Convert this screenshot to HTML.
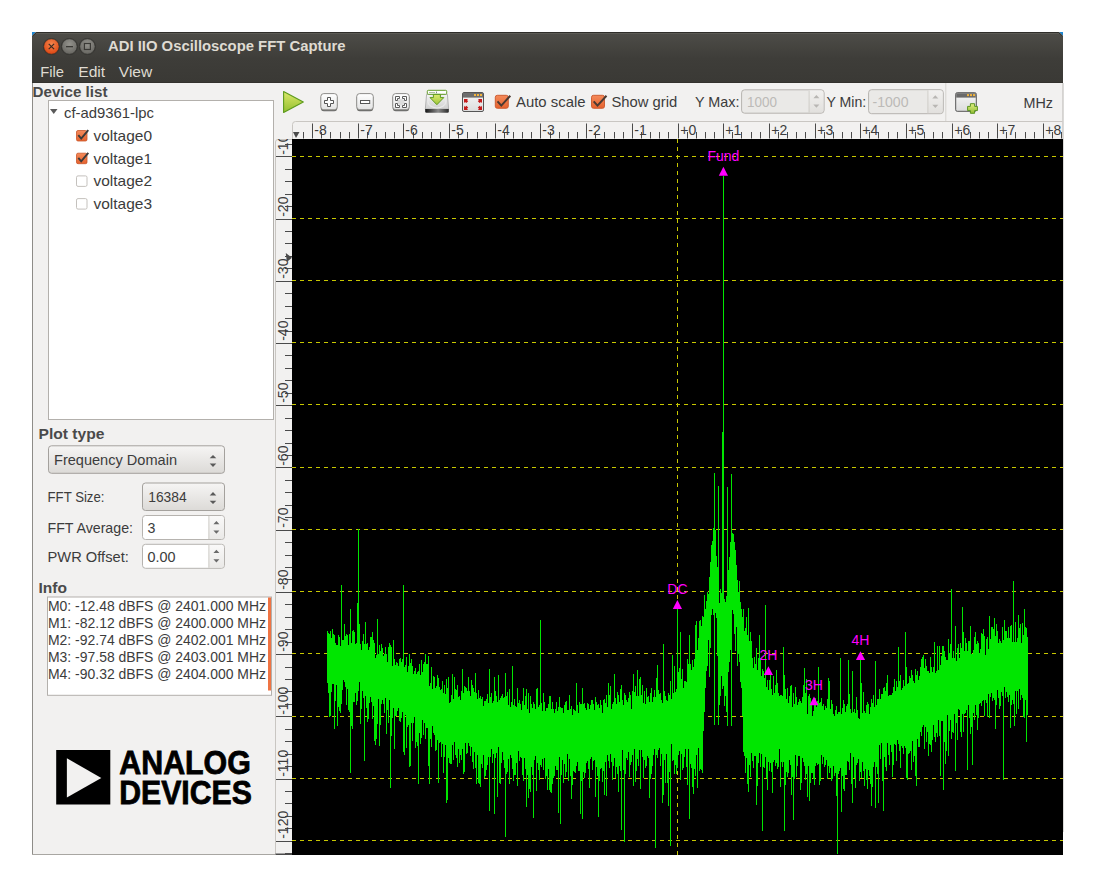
<!DOCTYPE html>
<html><head><meta charset="utf-8"><style>
html,body{margin:0;padding:0;background:#fff;width:1096px;height:888px;overflow:hidden}
svg{display:block;font-family:"Liberation Sans", sans-serif}
</style></head><body>
<svg width="1096" height="888" viewBox="0 0 1096 888">
<rect x="0" y="0" width="1096" height="888" fill="#ffffff"/><defs><linearGradient id="tb" gradientUnits="userSpaceOnUse" x1="0" y1="34" x2="0" y2="83"><stop offset="0" stop-color="#4d4c47"/><stop offset="0.5" stop-color="#3e3d39"/><stop offset="1" stop-color="#3a3935"/></linearGradient><radialGradient id="cls" cx="0.5" cy="0.35" r="0.6"><stop offset="0" stop-color="#f4874f"/><stop offset="1" stop-color="#df4a16"/></radialGradient><radialGradient id="gbtn" cx="0.5" cy="0.35" r="0.6"><stop offset="0" stop-color="#94938d"/><stop offset="1" stop-color="#6a6964"/></radialGradient><linearGradient id="play" x1="0" y1="0" x2="0" y2="1"><stop offset="0" stop-color="#dbe86a"/><stop offset="1" stop-color="#93bf2f"/></linearGradient><linearGradient id="btn" x1="0" y1="0" x2="0" y2="1"><stop offset="0" stop-color="#ffffff"/><stop offset="0.55" stop-color="#f0f0f0"/><stop offset="1" stop-color="#e2e2e2"/></linearGradient><linearGradient id="combo" x1="0" y1="0" x2="0" y2="1"><stop offset="0" stop-color="#f6f5f4"/><stop offset="1" stop-color="#dcdad7"/></linearGradient><linearGradient id="chk" x1="0" y1="0" x2="0" y2="1"><stop offset="0" stop-color="#f58a5a"/><stop offset="1" stop-color="#e5632f"/></linearGradient></defs><path d="M32 32 h4 l-4 4 Z M1063 32 h-4 l4 4 Z" fill="#1e86d0"/><path d="M32 36 L36 32 H1059 L1063 36 V83 H32 Z" fill="url(#tb)"/><path d="M32.5 36 L36.5 32.5 H1058.5 L1062.5 36" fill="none" stroke="#2f2e2a" stroke-width="1"/><rect x="36" y="33" width="1023" height="1" fill="#5c5b55"/><rect x="32" y="82" width="1031" height="1" fill="#33322e"/><rect x="32" y="83" width="1031" height="772" fill="#f2f1f0"/><rect x="32" y="83" width="1" height="772" fill="#8e8c88"/><rect x="1062.5" y="83" width="1" height="749" fill="#b8b6b2"/><rect x="32" y="854" width="243" height="1" fill="#a8a6a2"/><circle cx="51.4" cy="46.5" r="8.6" fill="#3a3935"/><circle cx="69.4" cy="46.5" r="8.6" fill="#3a3935"/><circle cx="87.4" cy="46.5" r="8.6" fill="#3a3935"/><circle cx="51.4" cy="46.5" r="7.7" fill="url(#cls)" stroke="#2e2d2a" stroke-width="0.6"/><path d="M48.7 43.8 L54.1 49.2 M54.1 43.8 L48.7 49.2" stroke="#3a2a22" stroke-width="1.2"/><circle cx="69.4" cy="46.5" r="7.7" fill="url(#gbtn)" stroke="#2e2d2a" stroke-width="0.6"/><rect x="66" y="46" width="7" height="1.3" fill="#3a3935"/><circle cx="87.4" cy="46.5" r="7.7" fill="url(#gbtn)" stroke="#2e2d2a" stroke-width="0.6"/><rect x="84.4" y="43.5" width="6" height="6" fill="none" stroke="#3a3935" stroke-width="1.2"/><text x="108.0" y="50.9" font-size="14.4" font-weight="700" fill="#dfdbd2" text-anchor="start" textLength="237.5" lengthAdjust="spacingAndGlyphs" >ADI IIO Oscilloscope FFT Capture</text><text x="40.2" y="76.7" font-size="14.4" font-weight="400" fill="#dfdbd2" text-anchor="start" textLength="23.8" lengthAdjust="spacingAndGlyphs" >File</text><text x="78.2" y="76.7" font-size="14.4" font-weight="400" fill="#dfdbd2" text-anchor="start" textLength="27.0" lengthAdjust="spacingAndGlyphs" >Edit</text><text x="118.8" y="76.7" font-size="14.4" font-weight="400" fill="#dfdbd2" text-anchor="start" textLength="33.4" lengthAdjust="spacingAndGlyphs" >View</text><text x="32.5" y="96.5" font-size="13.8" font-weight="700" fill="#4a4a4a" text-anchor="start" textLength="75.0" lengthAdjust="spacingAndGlyphs" >Device list</text><rect x="48.5" y="100.5" width="225" height="319" fill="#ffffff" stroke="#b3b0ac" stroke-width="1"/><path d="M50 109 L57.5 109 L53.75 114 Z" fill="#5a5a5a"/><text x="64.0" y="118.0" font-size="14.2" font-weight="400" fill="#3c3c3c" text-anchor="start" textLength="90.0" lengthAdjust="spacingAndGlyphs" >cf-ad9361-lpc</text><rect x="76.5" y="130.5" width="10.5" height="10.5" rx="1.5" fill="url(#chk)" stroke="#c9562a" stroke-width="0.8"/><path d="M78.3 135.2 L81.2 138.6 L88.3 130.2" fill="none" stroke="#3a3a3a" stroke-width="1.9"/><text x="93.5" y="141.0" font-size="14.2" font-weight="400" fill="#3c3c3c" text-anchor="start" textLength="58.5" lengthAdjust="spacingAndGlyphs" >voltage0</text><rect x="76.5" y="153.2" width="10.5" height="10.5" rx="1.5" fill="url(#chk)" stroke="#c9562a" stroke-width="0.8"/><path d="M78.3 157.9 L81.2 161.3 L88.3 152.9" fill="none" stroke="#3a3a3a" stroke-width="1.9"/><text x="93.5" y="163.7" font-size="14.2" font-weight="400" fill="#3c3c3c" text-anchor="start" textLength="58.5" lengthAdjust="spacingAndGlyphs" >voltage1</text><rect x="76.5" y="175.9" width="10.5" height="10.5" rx="1.5" fill="#ffffff" stroke="#bdbab6" stroke-width="0.9"/><text x="93.5" y="186.4" font-size="14.2" font-weight="400" fill="#3c3c3c" text-anchor="start" textLength="58.5" lengthAdjust="spacingAndGlyphs" >voltage2</text><rect x="76.5" y="198.6" width="10.5" height="10.5" rx="1.5" fill="#ffffff" stroke="#bdbab6" stroke-width="0.9"/><text x="93.5" y="209.1" font-size="14.2" font-weight="400" fill="#3c3c3c" text-anchor="start" textLength="58.5" lengthAdjust="spacingAndGlyphs" >voltage3</text><text x="38.5" y="438.5" font-size="13.8" font-weight="700" fill="#4a4a4a" text-anchor="start" textLength="66.0" lengthAdjust="spacingAndGlyphs" >Plot type</text><rect x="48.5" y="445.8" width="176.0" height="27.5" rx="3" fill="url(#combo)" stroke="#a4a19d" stroke-width="1"/><path d="M209.7 458.2 L213.0 454.9 L216.3 458.2 Z M209.7 463.6 L213.0 466.9 L216.3 463.6 Z" fill="#5a5a5a"/><text x="54.0" y="465.3" font-size="14.2" font-weight="400" fill="#3c3c3c" text-anchor="start" textLength="123.0" lengthAdjust="spacingAndGlyphs" >Frequency Domain</text><text x="47.5" y="502.2" font-size="14.2" font-weight="400" fill="#3c3c3c" text-anchor="start" textLength="57.0" lengthAdjust="spacingAndGlyphs" >FFT Size:</text><rect x="142.5" y="483.0" width="82.0" height="27.5" rx="3" fill="url(#combo)" stroke="#a4a19d" stroke-width="1"/><path d="M209.7 495.4 L213.0 492.1 L216.3 495.4 Z M209.7 500.8 L213.0 504.1 L216.3 500.8 Z" fill="#5a5a5a"/><text x="148.2" y="502.2" font-size="14.2" font-weight="400" fill="#3c3c3c" text-anchor="start" textLength="38.5" lengthAdjust="spacingAndGlyphs" >16384</text><text x="47.5" y="532.8" font-size="14.2" font-weight="400" fill="#3c3c3c" text-anchor="start" textLength="85.5" lengthAdjust="spacingAndGlyphs" >FFT Average:</text><rect x="142.5" y="515.5" width="82.0" height="24.0" rx="3" fill="#ffffff" stroke="#b6b3af" stroke-width="1"/><path d="M208.4 516.0 H221.5 Q224.0 516.0 224.0 518.5 V536.5 Q224.0 539.0 221.5 539.0 H208.4 Z" fill="url(#combo)" opacity="0.6"/><rect x="208.4" y="516.0" width="1" height="23.0" fill="#d0cdc9"/><path d="M213.4 524.2 L216.4 521.0 L219.4 524.2 Z M213.4 530.5 L216.4 533.7 L219.4 530.5 Z" fill="#6a6a6a"/><text x="147.5" y="532.8" font-size="14.2" font-weight="400" fill="#3c3c3c" text-anchor="start" >3</text><text x="47.5" y="561.6" font-size="14.2" font-weight="400" fill="#3c3c3c" text-anchor="start" textLength="81.3" lengthAdjust="spacingAndGlyphs" >PWR Offset:</text><rect x="142.5" y="544.3" width="82.0" height="24.0" rx="3" fill="#ffffff" stroke="#b6b3af" stroke-width="1"/><path d="M208.4 544.8 H221.5 Q224.0 544.8 224.0 547.3 V565.3 Q224.0 567.8 221.5 567.8 H208.4 Z" fill="url(#combo)" opacity="0.6"/><rect x="208.4" y="544.8" width="1" height="23.0" fill="#d0cdc9"/><path d="M213.4 553.0 L216.4 549.8 L219.4 553.0 Z M213.4 559.3 L216.4 562.5 L219.4 559.3 Z" fill="#6a6a6a"/><text x="147.5" y="561.6" font-size="14.2" font-weight="400" fill="#3c3c3c" text-anchor="start" textLength="28.0" lengthAdjust="spacingAndGlyphs" >0.00</text><text x="38.5" y="593.0" font-size="13.8" font-weight="700" fill="#4a4a4a" text-anchor="start" textLength="28.5" lengthAdjust="spacingAndGlyphs" >Info</text><rect x="47.5" y="597" width="224" height="98.3" fill="#ffffff" stroke="#b3b0ac" stroke-width="1"/><rect x="268" y="597.5" width="3" height="93" fill="#ef7444"/><text x="48.0" y="611.2" font-size="13.9" font-weight="400" fill="#3c3c3c" text-anchor="start" textLength="218.0" lengthAdjust="spacingAndGlyphs" >M0: -12.48 dBFS @ 2401.000 MHz</text><text x="48.0" y="628.1" font-size="13.9" font-weight="400" fill="#3c3c3c" text-anchor="start" textLength="218.0" lengthAdjust="spacingAndGlyphs" >M1: -82.12 dBFS @ 2400.000 MHz</text><text x="48.0" y="644.9" font-size="13.9" font-weight="400" fill="#3c3c3c" text-anchor="start" textLength="218.0" lengthAdjust="spacingAndGlyphs" >M2: -92.74 dBFS @ 2402.001 MHz</text><text x="48.0" y="661.8" font-size="13.9" font-weight="400" fill="#3c3c3c" text-anchor="start" textLength="218.0" lengthAdjust="spacingAndGlyphs" >M3: -97.58 dBFS @ 2403.001 MHz</text><text x="48.0" y="678.7" font-size="13.9" font-weight="400" fill="#3c3c3c" text-anchor="start" textLength="218.0" lengthAdjust="spacingAndGlyphs" >M4: -90.32 dBFS @ 2404.000 MHz</text><rect x="56.2" y="750" width="54.1" height="54.5" fill="#000"/><path d="M66.9 758.3 L101.3 777.9 L66.9 797.6 Z" fill="#f2f1f0"/><text x="119.3" y="773.9" font-size="33" font-weight="700" fill="#000" text-anchor="start" textLength="131.5" lengthAdjust="spacingAndGlyphs" stroke="#000" stroke-width="0.8">ANALOG</text><text x="119.3" y="804.1" font-size="33" font-weight="700" fill="#000" text-anchor="start" textLength="132.5" lengthAdjust="spacingAndGlyphs" stroke="#000" stroke-width="0.8">DEVICES</text><path d="M283.6 91.6 L303.3 101.9 L283.6 112.5 Z" fill="url(#play)" stroke="#5c9a1c" stroke-width="1.1" stroke-linejoin="round"/><rect x="320.9" y="94.3" width="16.3" height="17.0" rx="3" fill="#6a6a68"/><rect x="320.8" y="93.6" width="16.5" height="16.2" rx="3" fill="url(#btn)" stroke="#8d8c89" stroke-width="1"/><path d="M327.5 97.5 H330.5 V100.5 H333.5 V103.5 H330.5 V106.5 H327.5 V103.5 H324.5 V100.5 H327.5 Z" fill="#ffffff" stroke="#555555" stroke-width="1"/><rect x="356.8" y="94.3" width="16.4" height="16.9" rx="3" fill="#6a6a68"/><rect x="356.7" y="93.6" width="16.6" height="16.1" rx="3" fill="url(#btn)" stroke="#8d8c89" stroke-width="1"/><rect x="360.5" y="100.5" width="9.2" height="3" fill="#ffffff" stroke="#555555" stroke-width="1"/><rect x="392.8" y="94.3" width="16.4" height="16.9" rx="3" fill="#6a6a68"/><rect x="392.7" y="93.6" width="16.6" height="16.1" rx="3" fill="url(#btn)" stroke="#8d8c89" stroke-width="1"/><ellipse cx="401" cy="102" rx="3.5" ry="3" fill="#dcdcdc"/><path d="M395.5 100.5 V96.5 H399.5 V98.5 H397.5 V100.5 Z M406.5 100.5 V96.5 H402.5 V98.5 H404.5 V100.5 Z M395.5 103.5 V107.5 H399.5 V105.5 H397.5 V103.5 Z M406.5 103.5 V107.5 H402.5 V105.5 H404.5 V103.5 Z" fill="#ffffff" stroke="#5c5c5c" stroke-width="1"/><defs><linearGradient id="drvb" x1="0" y1="0" x2="0" y2="1"><stop offset="0" stop-color="#f4f4f4"/><stop offset="1" stop-color="#cfcfcf"/></linearGradient><linearGradient id="drvd" x1="0" y1="0" x2="1" y2="0"><stop offset="0" stop-color="#151515"/><stop offset="0.55" stop-color="#8a8a8a"/><stop offset="1" stop-color="#2a2a2a"/></linearGradient><linearGradient id="arw" x1="0" y1="0" x2="0" y2="1"><stop offset="0" stop-color="#dcec6e"/><stop offset="1" stop-color="#9ec43c"/></linearGradient></defs><path d="M426.6 94.3 H447.4 L448.6 109.2 H425.3 Z" fill="url(#drvb)" stroke="#a3a3a3" stroke-width="0.8"/><ellipse cx="436.9" cy="101.5" rx="9" ry="6.5" fill="none" stroke="#e9e9e9" stroke-width="1.2"/><path d="M425.2 109 H448.8 V111.5 Q448.8 112.8 447.5 112.8 H426.5 Q425.2 112.8 425.2 111.5 Z" fill="url(#drvd)"/><rect x="427.3" y="90.3" width="19.4" height="4" rx="1" fill="#ffffff" stroke="#5f9a22" stroke-width="1"/><rect x="429" y="92" width="6" height="0.8" fill="#9ab08a"/><rect x="436.2" y="91.6" width="0.8" height="1.6" fill="#666"/><path d="M433.4 94.4 H440.4 V97.6 H443.8 L436.9 104.7 L430 97.6 H433.4 Z" fill="url(#arw)" stroke="#5f9a22" stroke-width="1"/><rect x="462.5" y="92.5" width="21" height="19" rx="1.5" fill="url(#nwb)" stroke="#555" stroke-width="1"/><rect x="463" y="93" width="20" height="4.6" fill="#6d6d6d"/><rect x="474" y="94" width="2" height="2" fill="#f3b43c"/><rect x="477" y="94" width="2" height="2" fill="#f3b43c"/><rect x="480" y="94" width="2" height="2" fill="#f3b43c"/><path d="M0 0 H4.1 L3 1.1 L4.2 2.3 L2.3 4.2 L1.1 3 L0 4.1 Z" fill="#c41c1c" transform="translate(464 98.9)"/><path d="M0 0 H4.1 L3 1.1 L4.2 2.3 L2.3 4.2 L1.1 3 L0 4.1 Z" fill="#c41c1c" transform="translate(482 98.9) scale(-1 1)"/><path d="M0 0 H4.1 L3 1.1 L4.2 2.3 L2.3 4.2 L1.1 3 L0 4.1 Z" fill="#c41c1c" transform="translate(464 109.9) scale(1 -1)"/><path d="M0 0 H4.1 L3 1.1 L4.2 2.3 L2.3 4.2 L1.1 3 L0 4.1 Z" fill="#c41c1c" transform="translate(482 109.9) scale(-1 -1)"/><rect x="495.3" y="95.3" width="13" height="13" rx="2" fill="url(#chk)" stroke="#c9562a" stroke-width="0.9"/><path d="M497.5 101.3 L501.3 105.6 L510.3 95.8" fill="none" stroke="#4a3a33" stroke-width="2"/><rect x="591.5" y="95.3" width="13" height="13" rx="2" fill="url(#chk)" stroke="#c9562a" stroke-width="0.9"/><path d="M593.7 101.3 L597.5 105.6 L606.5 95.8" fill="none" stroke="#4a3a33" stroke-width="2"/><text x="516.0" y="107.0" font-size="14.2" font-weight="400" fill="#3c3c3c" text-anchor="start" textLength="69.5" lengthAdjust="spacingAndGlyphs" >Auto scale</text><text x="611.5" y="107.0" font-size="14.2" font-weight="400" fill="#3c3c3c" text-anchor="start" textLength="65.8" lengthAdjust="spacingAndGlyphs" >Show grid</text><text x="695.0" y="106.9" font-size="14.2" font-weight="400" fill="#3c3c3c" text-anchor="start" textLength="44.5" lengthAdjust="spacingAndGlyphs" >Y Max:</text><rect x="741.6" y="89.8" width="82.5" height="23.4" rx="3" fill="#eae9e7" stroke="#b6b3af" stroke-width="1"/><path d="M808.6 90.3 H821.1 Q823.6 90.3 823.6 92.8 V110.2 Q823.6 112.7 821.1 112.7 H808.6 Z" fill="url(#combo)" opacity="0.6"/><rect x="808.6" y="90.3" width="1" height="22.4" fill="#d0cdc9"/><path d="M813.4 98.2 L816.4 95.0 L819.4 98.2 Z M813.4 104.5 L816.4 107.7 L819.4 104.5 Z" fill="#b8b6b3"/><text x="747.0" y="106.9" font-size="14.2" font-weight="400" fill="#bcbab7" text-anchor="start" textLength="30.0" lengthAdjust="spacingAndGlyphs" >1000</text><text x="826.5" y="106.9" font-size="14.2" font-weight="400" fill="#3c3c3c" text-anchor="start" textLength="39.8" lengthAdjust="spacingAndGlyphs" >Y Min:</text><rect x="868.6" y="89.7" width="74.7" height="24.0" rx="3" fill="#eae9e7" stroke="#b6b3af" stroke-width="1"/><path d="M927.4 90.2 H940.3 Q942.8 90.2 942.8 92.7 V110.7 Q942.8 113.2 940.3 113.2 H927.4 Z" fill="url(#combo)" opacity="0.6"/><rect x="927.4" y="90.2" width="1" height="23.0" fill="#d0cdc9"/><path d="M932.3 98.4 L935.3 95.2 L938.3 98.4 Z M932.3 104.7 L935.3 107.9 L938.3 104.7 Z" fill="#b8b6b3"/><text x="872.5" y="106.9" font-size="14.2" font-weight="400" fill="#bcbab7" text-anchor="start" textLength="36.0" lengthAdjust="spacingAndGlyphs" >-1000</text><rect x="945.3" y="83" width="1" height="38" fill="#d6d4d0"/><defs><linearGradient id="nwb" x1="0" y1="0" x2="0" y2="1"><stop offset="0" stop-color="#f7f7f7"/><stop offset="1" stop-color="#dcdcdc"/></linearGradient><linearGradient id="nwp" x1="0" y1="0" x2="0" y2="1"><stop offset="0" stop-color="#e0ee80"/><stop offset="1" stop-color="#93bd34"/></linearGradient></defs><rect x="955.7" y="92.7" width="20.6" height="18.6" rx="1.5" fill="url(#nwb)" stroke="#555" stroke-width="1"/><rect x="956.2" y="93.2" width="19.6" height="4.4" fill="#6a6a6a"/><rect x="967" y="94.1" width="2" height="2" fill="#f3b43c"/><rect x="970" y="94.1" width="2" height="2" fill="#f3b43c"/><rect x="973" y="94.1" width="2" height="2" fill="#f3b43c"/><path d="M970.4 103.7 H974.6 V106.4 H977.4 V110.6 H974.6 V113.3 H970.4 V110.6 H967.6 V106.4 H970.4 Z" fill="url(#nwp)" stroke="#5b9420" stroke-width="1"/><text x="1023.5" y="107.5" font-size="14.2" font-weight="400" fill="#3c3c3c" text-anchor="start" textLength="29.5" lengthAdjust="spacingAndGlyphs" >MHz</text>
<rect x="292" y="139" width="771" height="716" fill="#000"/><path d="M292 156.5 H1063 M292 218.5 H1063 M292 280.5 H1063 M292 342.5 H1063 M292 404.5 H1063 M292 467.5 H1063 M292 529.5 H1063 M292 591.5 H1063 M292 653.5 H1063 M292 716.5 H1063 M292 778.5 H1063 M292 840.5 H1063" stroke="#c8c800" stroke-width="1" stroke-dasharray="4 4"/><path d="M677.5 139 V855" stroke="#c8c800" stroke-width="1" stroke-dasharray="4 4"/>
<g shape-rendering="crispEdges"><path d="M327.5 631V683M328.5 633V693M329.5 634V717M330.5 631V716M331.5 638V692M332.5 629V684M333.5 634V684M334.5 635V729M335.5 643V701M336.5 645V685M337.5 645V726M338.5 635V707M339.5 637V711M340.5 646V713M341.5 635V704M342.5 640V690M343.5 640V680M344.5 624V682M345.5 636V687M346.5 634V705M347.5 635V689M348.5 645V710M349.5 634V712M350.5 609V724M351.5 643V726M352.5 631V729M353.5 630V702M354.5 632V702M355.5 644V693M356.5 643V705M357.5 645V701M358.5 639V691M359.5 624V682M360.5 644V724M361.5 650V709M362.5 641V691M363.5 634V698M364.5 644V716M365.5 622V696M366.5 644V708M367.5 643V722M368.5 650V719M369.5 647V703M370.5 637V697M371.5 637V702M372.5 632V719M373.5 640V706M374.5 643V741M375.5 658V745M376.5 655V739M377.5 619V724M378.5 654V699M379.5 645V746M380.5 651V725M381.5 644V704M382.5 648V700M383.5 656V704M384.5 654V713M385.5 647V698M386.5 654V734M387.5 662V710M388.5 647V723M389.5 643V700M390.5 645V788M391.5 647V736M392.5 666V718M393.5 640V708M394.5 659V749M395.5 665V716M396.5 662V716M397.5 663V711M398.5 666V708M399.5 659V721M400.5 658V722M401.5 662V718M402.5 659V712M403.5 662V752M404.5 667V755M405.5 665V715M406.5 657V748M407.5 672V727M408.5 666V725M409.5 654V767M410.5 663V766M411.5 659V723M412.5 666V741M413.5 674V723M414.5 671V717M415.5 668V748M416.5 674V742M417.5 672V746M418.5 671V784M419.5 664V733M420.5 675V744M421.5 660V738M422.5 672V720M423.5 664V735M424.5 662V723M425.5 654V739M426.5 664V728M427.5 664V728M428.5 656V766M429.5 686V737M430.5 683V739M431.5 667V747M432.5 689V726M433.5 676V733M434.5 677V735M435.5 688V751M436.5 686V750M437.5 675V740M438.5 678V783M439.5 687V743M440.5 690V742M441.5 689V757M442.5 681V744M443.5 693V773M444.5 685V757M445.5 694V745M446.5 679V803M447.5 688V752M448.5 677V758M449.5 703V763M450.5 702V764M451.5 695V764M452.5 674V745M453.5 699V760M454.5 677V742M455.5 689V755M456.5 690V758M457.5 685V767M458.5 697V749M459.5 696V763M460.5 700V755M461.5 691V760M462.5 669V749M463.5 693V774M464.5 686V772M465.5 687V743M466.5 688V754M467.5 691V753M468.5 677V743M469.5 691V746M470.5 696V756M471.5 680V747M472.5 685V762M473.5 688V769M474.5 692V752M475.5 673V768M476.5 693V784M477.5 699V755M478.5 690V783M479.5 698V784M480.5 696V787M481.5 699V764M482.5 697V768M483.5 706V755M484.5 701V778M485.5 701V776M486.5 699V770M487.5 694V765M488.5 703V757M489.5 669V747M490.5 697V757M491.5 693V749M492.5 703V763M493.5 701V754M494.5 677V814M495.5 691V758M496.5 696V753M497.5 702V797M498.5 675V747M499.5 700V783M500.5 698V784M501.5 696V763M502.5 694V752M503.5 698V760M504.5 697V768M505.5 673V780M506.5 696V774M507.5 692V772M508.5 705V759M509.5 689V784M510.5 707V755M511.5 702V758M512.5 666V769M513.5 705V781M514.5 699V775M515.5 706V775M516.5 707V763M517.5 688V786M518.5 703V751M519.5 700V761M520.5 704V757M521.5 710V758M522.5 701V775M523.5 688V781M524.5 705V758M525.5 696V769M526.5 689V807M527.5 709V775M528.5 693V798M529.5 713V789M530.5 696V792M531.5 704V767M532.5 708V775M533.5 702V818M534.5 704V760M535.5 709V756M536.5 689V791M537.5 688V763M538.5 707V770M539.5 705V780M540.5 704V765M541.5 703V767M542.5 711V759M543.5 693V770M544.5 702V758M545.5 711V779M546.5 708V776M547.5 708V790M548.5 704V769M549.5 696V790M550.5 696V792M551.5 709V793M552.5 702V784M553.5 709V778M554.5 713V776M555.5 709V766M556.5 702V770M557.5 711V770M558.5 707V813M559.5 697V757M560.5 707V768M561.5 708V775M562.5 708V760M563.5 713V783M564.5 705V764M565.5 702V777M566.5 701V772M567.5 710V754M568.5 710V781M569.5 695V759M570.5 709V776M571.5 706V799M572.5 715V785M573.5 709V771M574.5 710V772M575.5 711V773M576.5 683V766M577.5 705V762M578.5 713V771M579.5 702V771M580.5 704V814M581.5 704V781M582.5 688V819M583.5 704V772M584.5 703V778M585.5 708V773M586.5 710V763M587.5 703V761M588.5 704V769M589.5 709V788M590.5 705V759M591.5 700V757M592.5 700V770M593.5 704V761M594.5 710V760M595.5 697V797M596.5 702V767M597.5 705V776M598.5 704V768M599.5 708V781M600.5 700V769M601.5 705V768M602.5 713V782M603.5 700V771M604.5 699V795M605.5 703V762M606.5 695V796M607.5 707V755M608.5 683V761M609.5 695V768M610.5 686V754M611.5 709V762M612.5 704V780M613.5 702V766M614.5 674V758M615.5 698V778M616.5 704V767M617.5 692V774M618.5 695V792M619.5 702V766M620.5 689V771M621.5 685V830M622.5 700V750M623.5 705V770M624.5 693V760M625.5 695V774M626.5 700V758M627.5 702V760M628.5 698V752M629.5 692V777M630.5 695V765M631.5 709V762M632.5 691V755M633.5 674V786M634.5 692V749M635.5 686V782M636.5 696V771M637.5 670V759M638.5 696V766M639.5 679V750M640.5 677V789M641.5 695V750M642.5 685V757M643.5 703V778M644.5 691V760M645.5 704V768M646.5 688V766M647.5 697V756M648.5 696V758M649.5 702V798M650.5 693V779M651.5 688V774M652.5 702V766M653.5 697V755M654.5 690V749M655.5 697V771M656.5 678V755M657.5 665V758M658.5 690V750M659.5 694V748M660.5 693V766M661.5 700V754M662.5 703V803M663.5 700V795M664.5 691V760M665.5 696V783M666.5 700V754M667.5 701V783M668.5 693V806M669.5 695V772M670.5 681V806M671.5 699V744M672.5 655V761M673.5 693V760M674.5 666V774M675.5 692V765M676.5 689V774M677.5 691V768M678.5 672V755M679.5 668V751M680.5 632V780M681.5 679V754M682.5 669V770M683.5 688V768M684.5 681V757M685.5 681V749M686.5 682V767M687.5 659V785M688.5 664V749M689.5 635V819M690.5 664V764M691.5 670V768M692.5 660V787M693.5 667V794M694.5 659V769M695.5 625V776M696.5 621V755M697.5 650V762M698.5 638V748M699.5 621V771M700.5 620V769M701.5 626V770M702.5 616V773M703.5 617V731M704.5 595V712M705.5 609V688M706.5 601V671M707.5 592V666M708.5 594V640M709.5 577V677M710.5 562V648M711.5 545V615M712.5 541V609M713.5 528V615M714.5 535V616M715.5 530V613M716.5 556V618M717.5 567V656M718.5 598V662M719.5 603V705M720.5 589V696M721.5 593V676M722.5 601V689M723.5 599V686M724.5 599V706M725.5 602V696M726.5 596V712M727.5 602V689M728.5 570V672M729.5 557V662M730.5 542V650M731.5 533V642M732.5 533V610M733.5 534V614M734.5 542V634M735.5 550V651M736.5 565V627M737.5 580V666M738.5 592V654M739.5 581V662M740.5 602V682M741.5 609V688M742.5 617V716M743.5 609V752M744.5 631V756M745.5 628V773M746.5 617V758M747.5 635V784M748.5 608V792M749.5 641V765M750.5 632V777M751.5 641V753M752.5 658V761M753.5 668V768M754.5 657V756M755.5 664V756M756.5 648V805M757.5 670V786M758.5 658V763M759.5 635V753M760.5 658V767M761.5 676V754M762.5 669V763M763.5 671V767M764.5 678V768M765.5 605V757M766.5 687V778M767.5 680V790M768.5 690V762M769.5 680V771M770.5 675V763M771.5 689V772M772.5 695V793M773.5 676V762M774.5 693V760M775.5 685V766M776.5 670V763M777.5 683V769M778.5 693V767M779.5 696V749M780.5 695V787M781.5 695V762M782.5 696V767M783.5 692V762M784.5 675V789M785.5 689V785M786.5 699V772M787.5 688V777M788.5 703V773M789.5 696V760M790.5 686V765M791.5 685V795M792.5 707V777M793.5 693V820M794.5 704V779M795.5 687V755M796.5 697V777M797.5 705V766M798.5 702V756M799.5 699V756M800.5 701V790M801.5 703V783M802.5 697V758M803.5 685V762M804.5 668V766M805.5 693V780M806.5 679V774M807.5 714V797M808.5 696V766M809.5 694V801M810.5 698V783M811.5 703V773M812.5 716V773M813.5 711V779M814.5 705V785M815.5 698V766M816.5 707V763M817.5 701V765M818.5 702V764M819.5 703V785M820.5 702V781M821.5 698V755M822.5 706V764M823.5 704V757M824.5 710V767M825.5 706V765M826.5 708V760M827.5 699V779M828.5 678V766M829.5 681V773M830.5 709V768M831.5 700V781M832.5 704V779M833.5 714V766M834.5 716V776M835.5 710V773M836.5 706V796M837.5 714V762M838.5 712V774M839.5 712V771M840.5 712V768M841.5 714V812M842.5 708V776M843.5 700V789M844.5 704V791M845.5 712V775M846.5 706V775M847.5 704V761M848.5 715V762M849.5 694V770M850.5 709V753M851.5 713V784M852.5 671V803M853.5 712V757M854.5 709V778M855.5 713V788M856.5 697V765M857.5 710V763M858.5 718V759M859.5 719V781M860.5 713V772M861.5 683V778M862.5 713V762M863.5 692V771M864.5 711V786M865.5 713V769M866.5 705V780M867.5 702V789M868.5 704V770M869.5 714V776M870.5 707V784M871.5 699V782M872.5 703V787M873.5 695V767M874.5 707V762M875.5 661V808M876.5 705V767M877.5 699V774M878.5 699V803M879.5 689V745M880.5 699V759M881.5 694V743M882.5 694V781M883.5 688V811M884.5 687V757M885.5 691V767M886.5 683V771M887.5 675V743M888.5 696V755M889.5 695V765M890.5 695V745M891.5 695V752M892.5 693V777M893.5 687V765M894.5 679V744M895.5 691V745M896.5 681V761M897.5 687V740M898.5 647V744M899.5 681V751M900.5 675V768M901.5 690V746M902.5 688V748M903.5 680V754M904.5 686V746M905.5 681V748M906.5 667V778M907.5 684V780M908.5 683V754M909.5 676V753M910.5 678V751M911.5 670V770M912.5 675V741M913.5 681V762M914.5 683V756M915.5 669V776M916.5 675V757M917.5 671V739M918.5 680V747M919.5 676V747M920.5 667V732M921.5 659V736M922.5 657V727M923.5 655V725M924.5 668V749M925.5 659V727M926.5 666V742M927.5 671V732M928.5 671V756M929.5 673V744M930.5 657V745M931.5 667V752M932.5 672V740M933.5 667V725M934.5 642V737M935.5 673V742M936.5 671V733M937.5 646V737M938.5 670V720M939.5 646V736M940.5 665V776M941.5 656V721M942.5 646V721M943.5 646V790M944.5 651V742M945.5 657V764M946.5 660V751M947.5 660V715M948.5 639V756M949.5 653V731M950.5 644V720M951.5 669V739M952.5 658V732M953.5 651V733M954.5 658V714M955.5 626V771M956.5 661V723M957.5 648V740M958.5 644V709M959.5 658V710M960.5 643V732M961.5 648V737M962.5 607V714M963.5 632V732M964.5 651V714M965.5 638V713M966.5 643V710M967.5 651V707M968.5 641V705M969.5 641V718M970.5 626V734M971.5 654V727M972.5 654V765M973.5 650V713M974.5 637V720M975.5 632V705M976.5 644V715M977.5 641V730M978.5 643V718M979.5 653V704M980.5 649V703M981.5 633V706M982.5 634V701M983.5 629V700M984.5 636V716M985.5 655V700M986.5 639V703M987.5 637V717M988.5 649V694M989.5 616V718M990.5 639V697M991.5 627V693M992.5 627V701M993.5 629V698M994.5 618V700M995.5 636V729M996.5 624V705M997.5 631V690M998.5 643V698M999.5 639V709M1000.5 641V706M1001.5 643V692M1002.5 627V696M1003.5 640V693M1004.5 620V687M1005.5 631V698M1006.5 631V692M1007.5 638V697M1008.5 627V702M1009.5 638V695M1010.5 626V728M1011.5 625V705M1012.5 642V700M1013.5 627V704M1014.5 642V726M1015.5 622V691M1016.5 642V714M1017.5 638V691M1018.5 615V709M1019.5 628V689M1020.5 624V700M1021.5 643V695M1022.5 623V698M1023.5 635V717M1024.5 609V718M1025.5 627V700M1026.5 628V693M1027.5 637V715" stroke="#00e600" stroke-width="1" fill="none"/><path d="M341.5 585V665M357.5 603V667M358.5 529V667M403.5 585V690M540.5 620V734M663.5 644V726M677.5 609V725M905.5 632V712M951.5 589V688M1013.5 581V664M783.5 647V731M818.5 667V734M840.5 658V736M848.5 660V736M860.5 660V736M714.5 473V725M718.5 486V725M727.5 487V726M731.5 474V726M350.5 666V773M364.5 669V761M429.5 707V784M447.5 719V800M489.5 728V811M505.5 730V837M560.5 735V824M598.5 732V817M624.5 729V842M655.5 726V848M670.5 726V846M697.5 724V788M762.5 728V831M784.5 731V831M837.5 735V854M871.5 730V806M916.5 706V786M967.5 681V770M1003.5 665V780M1026.5 663V742M722.5 432V620 M723.5 176V620" stroke="#00e600" stroke-width="1" fill="none"/></g>
<path d="M723.4 166.8 L728.0 175.7 L718.8 175.7 Z" fill="#ff00ff"/><text x="723.4" y="160.8" font-size="14" font-weight="400" fill="#ff00ff" text-anchor="middle" >Fund</text><path d="M677.4 600.1 L682.0 609.0 L672.8 609.0 Z" fill="#ff00ff"/><text x="677.4" y="594.1" font-size="14" font-weight="400" fill="#ff00ff" text-anchor="middle" >DC</text><path d="M768.4 666.2 L773.0 675.1 L763.8 675.1 Z" fill="#ff00ff"/><text x="768.4" y="660.2" font-size="14" font-weight="400" fill="#ff00ff" text-anchor="middle" >2H</text><path d="M814.0 696.4 L818.6 705.3 L809.4 705.3 Z" fill="#ff00ff"/><text x="814.0" y="690.4" font-size="14" font-weight="400" fill="#ff00ff" text-anchor="middle" >3H</text><path d="M860.5 651.2 L865.1 660.1 L855.9 660.1 Z" fill="#ff00ff"/><text x="860.5" y="645.2" font-size="14" font-weight="400" fill="#ff00ff" text-anchor="middle" >4H</text>
<path d="M292.5 139 V124.5 Q292.5 121.5 295.5 121.5 H1062.5" fill="none" stroke="#c9c6c2" stroke-width="1"/><path d="M292 854.5 H275.5 V142 Q275.5 139.5 278 139.5 H292" fill="none" stroke="#c9c6c2" stroke-width="1"/><path d="M303.5 132 V138.5 M312.5 123.5 V138.5 M321.5 132 V138.5 M330.5 132 V138.5 M340.5 132 V138.5 M349.5 132 V138.5 M358.5 123.5 V138.5 M367.5 132 V138.5 M376.5 132 V138.5 M385.5 132 V138.5 M394.5 132 V138.5 M403.5 123.5 V138.5 M413.5 132 V138.5 M422.5 132 V138.5 M431.5 132 V138.5 M440.5 132 V138.5 M449.5 123.5 V138.5 M458.5 132 V138.5 M467.5 132 V138.5 M477.5 132 V138.5 M486.5 132 V138.5 M495.5 123.5 V138.5 M504.5 132 V138.5 M513.5 132 V138.5 M522.5 132 V138.5 M531.5 132 V138.5 M540.5 123.5 V138.5 M550.5 132 V138.5 M559.5 132 V138.5 M568.5 132 V138.5 M577.5 132 V138.5 M586.5 123.5 V138.5 M595.5 132 V138.5 M604.5 132 V138.5 M614.5 132 V138.5 M623.5 132 V138.5 M632.5 123.5 V138.5 M641.5 132 V138.5 M650.5 132 V138.5 M659.5 132 V138.5 M668.5 132 V138.5 M678.5 123.5 V138.5 M687.5 132 V138.5 M696.5 132 V138.5 M705.5 132 V138.5 M714.5 132 V138.5 M723.5 123.5 V138.5 M732.5 132 V138.5 M741.5 132 V138.5 M751.5 132 V138.5 M760.5 132 V138.5 M769.5 123.5 V138.5 M778.5 132 V138.5 M787.5 132 V138.5 M796.5 132 V138.5 M805.5 132 V138.5 M815.5 123.5 V138.5 M824.5 132 V138.5 M833.5 132 V138.5 M842.5 132 V138.5 M851.5 132 V138.5 M860.5 123.5 V138.5 M869.5 132 V138.5 M878.5 132 V138.5 M888.5 132 V138.5 M897.5 132 V138.5 M906.5 123.5 V138.5 M915.5 132 V138.5 M924.5 132 V138.5 M933.5 132 V138.5 M942.5 132 V138.5 M952.5 123.5 V138.5 M961.5 132 V138.5 M970.5 132 V138.5 M979.5 132 V138.5 M988.5 132 V138.5 M997.5 123.5 V138.5 M1006.5 132 V138.5 M1015.5 132 V138.5 M1025.5 132 V138.5 M1034.5 132 V138.5 M1043.5 123.5 V138.5 M1052.5 132 V138.5 M1061.5 132 V138.5" stroke="#4a4a4a" stroke-width="1"/><text x="314.3" y="134.6" font-size="14" font-weight="400" fill="#3c3c3c" text-anchor="start" >-8</text><text x="360.3" y="134.6" font-size="14" font-weight="400" fill="#3c3c3c" text-anchor="start" >-7</text><text x="405.3" y="134.6" font-size="14" font-weight="400" fill="#3c3c3c" text-anchor="start" >-6</text><text x="451.3" y="134.6" font-size="14" font-weight="400" fill="#3c3c3c" text-anchor="start" >-5</text><text x="497.3" y="134.6" font-size="14" font-weight="400" fill="#3c3c3c" text-anchor="start" >-4</text><text x="542.3" y="134.6" font-size="14" font-weight="400" fill="#3c3c3c" text-anchor="start" >-3</text><text x="588.3" y="134.6" font-size="14" font-weight="400" fill="#3c3c3c" text-anchor="start" >-2</text><text x="634.3" y="134.6" font-size="14" font-weight="400" fill="#3c3c3c" text-anchor="start" >-1</text><text x="680.3" y="134.6" font-size="14" font-weight="400" fill="#3c3c3c" text-anchor="start" >+0</text><text x="725.3" y="134.6" font-size="14" font-weight="400" fill="#3c3c3c" text-anchor="start" >+1</text><text x="771.3" y="134.6" font-size="14" font-weight="400" fill="#3c3c3c" text-anchor="start" >+2</text><text x="817.3" y="134.6" font-size="14" font-weight="400" fill="#3c3c3c" text-anchor="start" >+3</text><text x="862.3" y="134.6" font-size="14" font-weight="400" fill="#3c3c3c" text-anchor="start" >+4</text><text x="908.3" y="134.6" font-size="14" font-weight="400" fill="#3c3c3c" text-anchor="start" >+5</text><text x="954.3" y="134.6" font-size="14" font-weight="400" fill="#3c3c3c" text-anchor="start" >+6</text><text x="999.3" y="134.6" font-size="14" font-weight="400" fill="#3c3c3c" text-anchor="start" >+7</text><text x="1045.3" y="134.6" font-size="14" font-weight="400" fill="#3c3c3c" text-anchor="start" >+8</text><path d="M293 132 L299.5 132 L296 138 Z" fill="#4a4a4a"/><path d="M285 144.5 H292 M276 156.5 H292 M285 169.5 H292 M285 181.5 H292 M285 194.5 H292 M285 206.5 H292 M276 219.5 H292 M285 231.5 H292 M285 243.5 H292 M285 256.5 H292 M285 268.5 H292 M276 281.5 H292 M285 293.5 H292 M285 306.5 H292 M285 318.5 H292 M285 331.5 H292 M276 343.5 H292 M285 355.5 H292 M285 368.5 H292 M285 380.5 H292 M285 393.5 H292 M276 405.5 H292 M285 418.5 H292 M285 430.5 H292 M285 443.5 H292 M285 455.5 H292 M276 467.5 H292 M285 480.5 H292 M285 492.5 H292 M285 505.5 H292 M285 517.5 H292 M276 530.5 H292 M285 542.5 H292 M285 555.5 H292 M285 567.5 H292 M285 579.5 H292 M276 592.5 H292 M285 604.5 H292 M285 617.5 H292 M285 629.5 H292 M285 642.5 H292 M276 654.5 H292 M285 667.5 H292 M285 679.5 H292 M285 691.5 H292 M285 704.5 H292 M276 716.5 H292 M285 729.5 H292 M285 741.5 H292 M285 754.5 H292 M285 766.5 H292 M276 779.5 H292 M285 791.5 H292 M285 803.5 H292 M285 816.5 H292 M285 828.5 H292 M276 841.5 H292 M285 853.5 H292" stroke="#4a4a4a" stroke-width="1"/><rect x="275.5" y="853.5" width="16.5" height="1.5" fill="#4a4a4a"/><clipPath id="vclip"><rect x="270" y="139" width="30" height="716"/></clipPath><g clip-path="url(#vclip)"><text transform="translate(287.7 154.8) rotate(-90)" x="0" y="0" font-size="14" fill="#3c3c3c">-10</text><text transform="translate(287.7 216.8) rotate(-90)" x="0" y="0" font-size="14" fill="#3c3c3c">-20</text><text transform="translate(287.7 278.8) rotate(-90)" x="0" y="0" font-size="14" fill="#3c3c3c">-30</text><text transform="translate(287.7 340.8) rotate(-90)" x="0" y="0" font-size="14" fill="#3c3c3c">-40</text><text transform="translate(287.7 402.8) rotate(-90)" x="0" y="0" font-size="14" fill="#3c3c3c">-50</text><text transform="translate(287.7 465.8) rotate(-90)" x="0" y="0" font-size="14" fill="#3c3c3c">-60</text><text transform="translate(287.7 527.8) rotate(-90)" x="0" y="0" font-size="14" fill="#3c3c3c">-70</text><text transform="translate(287.7 589.8) rotate(-90)" x="0" y="0" font-size="14" fill="#3c3c3c">-80</text><text transform="translate(287.7 651.8) rotate(-90)" x="0" y="0" font-size="14" fill="#3c3c3c">-90</text><text transform="translate(287.7 714.8) rotate(-90)" x="0" y="0" font-size="14" fill="#3c3c3c">-100</text><text transform="translate(287.7 776.8) rotate(-90)" x="0" y="0" font-size="14" fill="#3c3c3c">-110</text><text transform="translate(287.7 838.8) rotate(-90)" x="0" y="0" font-size="14" fill="#3c3c3c">-120</text></g><path d="M285.8 253 L292 257.8 L286.8 262 Z" fill="#4a4a4a"/>
</svg>
</body></html>
